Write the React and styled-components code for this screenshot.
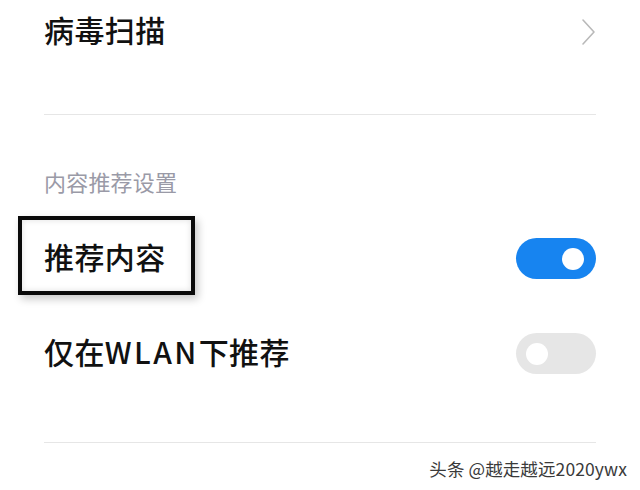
import React, { useState } from "react";
import styled, { createGlobalStyle } from "styled-components";

const Global = createGlobalStyle`
  html, body { margin: 0; padding: 0; background: #ffffff; }
  body { font-family: "Noto Sans CJK SC", "Noto Sans", sans-serif; }
`;

const Page = styled.div`
  width: 640px;
  height: 490px;
  overflow: hidden;
  background: #ffffff;
  display: flex;
  flex-direction: column;
`;

const Content = styled.div`
  padding: 0 44px;
  display: flex;
  flex-direction: column;
`;

const NavRow = styled.div`
  height: 64px;
  display: flex;
  align-items: center;
  justify-content: space-between;
`;

const Label = styled.span`
  position: relative;
  font-size: 30px;
  line-height: 40px;
  padding-bottom: 6px;
  font-weight: 500;
  color: #111111;
  letter-spacing: 0.4px;
`;

const Latin = styled.span`
  letter-spacing: 2.4px;
`;

const Divider = styled.div`
  height: 1px;
  background: #e6e6e6;
  margin-top: ${(p) => p.$top}px;
`;

const SectionTitle = styled.div`
  margin-top: 51px;
  font-size: 22px;
  line-height: 30px;
  color: #9a9aa7;
  letter-spacing: 0.2px;
`;

const ToggleRow = styled.div`
  height: 95px;
  display: flex;
  align-items: center;
  justify-content: space-between;
  margin-top: ${(p) => p.$top || 0}px;
`;

const Highlight = styled.span`
  position: absolute;
  left: -26px;
  right: -29px;
  top: -20px;
  bottom: -13px;
  border: 4px solid #0a0a0a;
  box-shadow: 3px 4px 8px rgba(0, 0, 0, 0.22), inset 0 0 6px rgba(0, 0, 0, 0.12);
  pointer-events: none;
`;

const Track = styled.button`
  width: 80px;
  height: 41px;
  border-radius: 21px;
  border: none;
  padding: 0;
  background: ${(p) => (p.$on ? "#1784f0" : "#e6e6e6")};
  position: relative;
  cursor: pointer;
  flex-shrink: 0;
`;

const Knob = styled.span`
  position: absolute;
  top: 9.5px;
  left: ${(p) => (p.$on ? "46px" : "10px")};
  width: 22px;
  height: 22px;
  border-radius: 50%;
  background: #ffffff;
`;

const Footer = styled.div`
  display: flex;
  justify-content: flex-end;
  padding-right: 13px;
  margin-top: 13px;
`;

const Watermark = styled.span`
  font-size: 17.5px;
  line-height: 26px;
  color: #3a3a3a;
  letter-spacing: 0.1px;
  text-shadow: 0 0 1px rgba(255, 255, 255, 0.9);
`;

const Chevron = () => (
  <svg width="16" height="28" viewBox="0 0 16 28" style={{ marginRight: "-1px" }}>
    <path d="M2 2 L13 14 L2 26" fill="none" stroke="#b9b9b9" strokeWidth="1.6" strokeLinecap="round" strokeLinejoin="round" />
  </svg>
);

const Switch = ({ on, onToggle }) => (
  <Track $on={on} onClick={onToggle} aria-pressed={on}>
    <Knob $on={on} />
  </Track>
);

export default function App() {
  const [rec, setRec] = useState(true);
  const [wlan, setWlan] = useState(false);
  return (
    <Page>
      <Global />
      <Content>
        <NavRow>
          <Label>病毒扫描</Label>
          <Chevron />
        </NavRow>
        <Divider $top={50} />
        <SectionTitle>内容推荐设置</SectionTitle>
        <ToggleRow $top={15}>
          <Label>
            推荐内容
            <Highlight />
          </Label>
          <Switch on={rec} onToggle={() => setRec(!rec)} />
        </ToggleRow>
        <ToggleRow>
          <Label>
            仅在<Latin>WLAN</Latin>下推荐
          </Label>
          <Switch on={wlan} onToggle={() => setWlan(!wlan)} />
        </ToggleRow>
        <Divider $top={41} />
      </Content>
      <Footer>
        <Watermark>头条 @越走越远2020ywx</Watermark>
      </Footer>
    </Page>
  );
}
